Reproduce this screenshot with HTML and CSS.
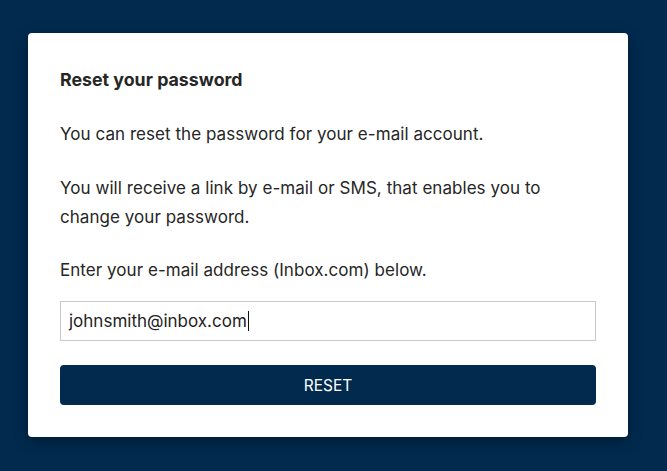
FILE: index.html
```html
<!DOCTYPE html>
<html lang="en">
    <head>
        <meta charset="UTF-8" />
        <meta name="viewport" content="width=device-width, initial-scale=1.0" />
        <title>Reset your password</title>
        <link rel="stylesheet" href="styles.css" />
    </head>
    <body>
        <div class="page">
            <form class="card">
                <h1 class="card-title">Reset your password</h1>
                <p class="intro">You can reset the password for your e-mail account.</p>
                <p class="info">You will receive a link by e-mail or SMS, that enables you to change your password.</p>
                <p class="hint">Enter your e-mail address (Inbox.com) below.</p>

                <div class="field">johnsmith@inbox.com<span class="caret"></span></div>

                <button type="button" class="reset-btn">RESET</button>
            </form>
        </div>
    </body>
</html>
```

FILE: styles.css
```css
body {
    margin: 0;
    font-family: Inter, "Noto Sans", sans-serif;
    background-color: #012a4e;
    color: #262626;
}

.page {
    padding: 33px 39px 34px 28px;
}

.card {
    width: 536px;
    padding: 32px 32px 32px;
    background-color: #fff;
    border-radius: 4px;
    box-shadow: 0 4px 14px rgba(0, 0, 0, 0.35);
}

.card-title {
    margin: 0 0 26px;
    font-size: 17.8px;
    font-weight: 700;
    line-height: 29px;
}

.card p {
    margin: 0 0 25px;
    font-size: 17px;
    letter-spacing: 0.05px;
    line-height: 29px;
}

.card .info {
    margin-bottom: 24px;
}

.card .hint {
    margin-bottom: 16px;
}

.field {
    display: flex;
    align-items: center;
    height: 38px;
    padding: 0 8px;
    border: 1px solid #c9c9c9;
    font-size: 17px;
    color: #222;
}

.caret {
    display: inline-block;
    width: 1px;
    height: 20px;
    margin-left: 1px;
    background-color: #111;
}

.reset-btn {
    display: block;
    width: 100%;
    height: 40px;
    margin-top: 24px;
    padding: 0;
    background-color: #012a4e;
    color: #fff;
    border: none;
    border-radius: 4px;
    font-family: inherit;
    font-size: 15.5px;
    cursor: pointer;
}
```
